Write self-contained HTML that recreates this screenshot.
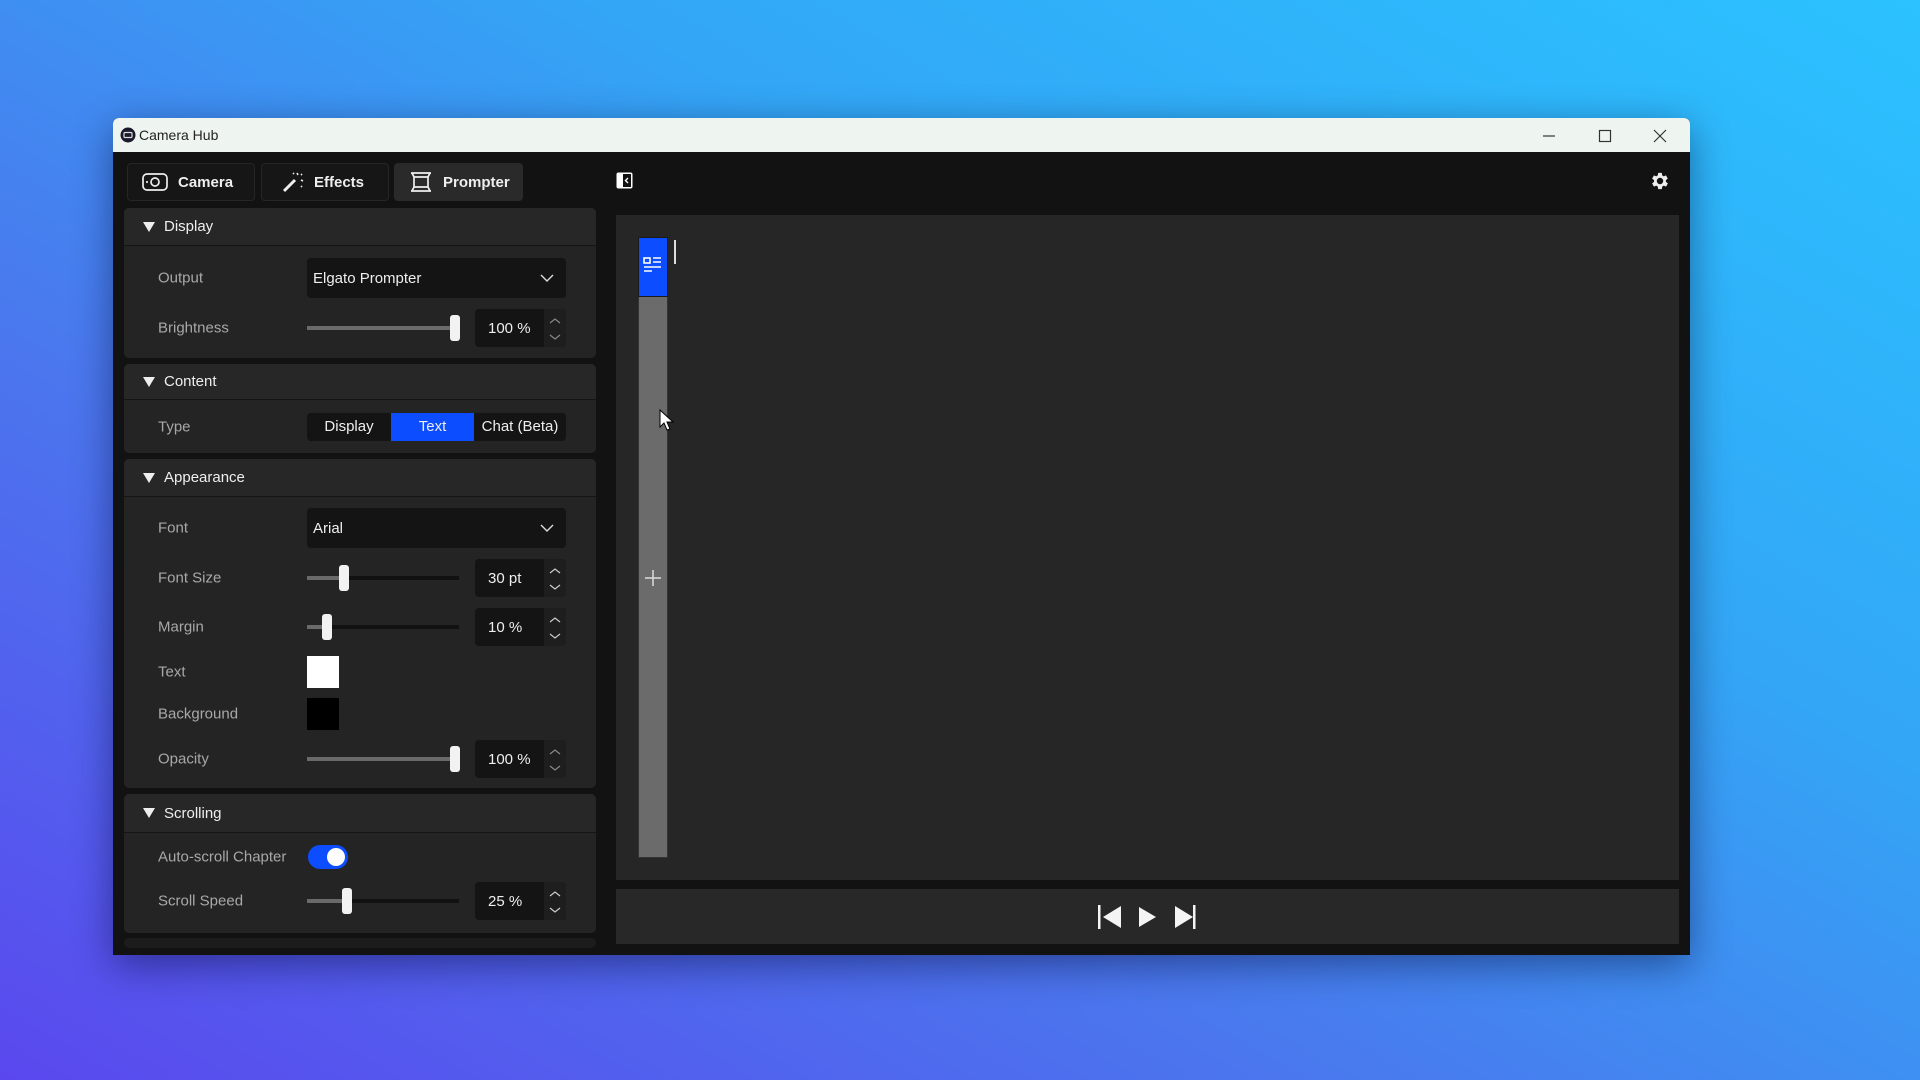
<!DOCTYPE html>
<html><head><meta charset="utf-8"><style>
*{margin:0;padding:0;box-sizing:border-box}
body{width:1920px;height:1080px;overflow:hidden;position:relative;font-family:"Liberation Sans",Arial,sans-serif;
background:linear-gradient(30deg,#5a48ee 0%,#4a78ee 35%,#33a6f6 65%,#2bc2ff 100%);}
.a{position:absolute}
.win{left:113px;top:118px;width:1577px;height:837px;background:#121212;box-shadow:0 10px 40px rgba(0,0,40,.45);border-radius:6px 6px 0 0;overflow:hidden}
.title{left:0;top:0;width:1577px;height:34px;background:#eef5f1;color:#222;font-size:14px}
.tab{top:45px;height:38px;border:1px solid #262626;background:#161616;border-radius:4px;color:#eee;font-weight:bold;font-size:15px;display:flex;align-items:center}
.sec{left:11px;width:472px;background:#242424;border-radius:5px}
.hdr{left:0;top:0;width:472px;border-bottom:1px solid #141414;background:#272727;border-radius:5px 5px 0 0;color:#eee;font-size:15px;display:flex;align-items:center;padding-left:40px}
.hdr:before{content:"";position:absolute;left:19px;top:50%;margin-top:-5px;border-left:6px solid transparent;border-right:6px solid transparent;border-top:10px solid #eee}
.lbl{left:34px;color:#a8a8a8;font-size:15px;transform:translateY(-50%)}
.dd{left:183px;width:259px;height:40px;background:#141414;border-radius:4px;color:#eee;font-size:15px;padding:0 0 0 6px;display:flex;align-items:center}
.trk{left:183px;width:152px;height:4px;background:#111;margin-top:-2px}
.fill{left:0;top:0;height:4px;background:#6a6a6a}
.th{width:10px;height:26px;background:#f2f2f2;border-radius:3px;margin-top:-13px}
.spin{left:351px;width:91px;height:38px;background:#141414;border-radius:4px;margin-top:-19px;color:#eee;font-size:15px}
.spin span{position:absolute;left:13px;top:11px}
.spin i{position:absolute;right:0;top:0;width:22px;height:38px;background:#1e1e1e;border-radius:0 4px 4px 0}
</style></head><body>
<div class="a win">
 <div class="a title">
  <svg class="a" style="left:7px;top:9px" width="16" height="16"><circle cx="8" cy="8" r="7.5" fill="#1a1a2a"/><rect x="4" y="5.5" width="8" height="5" rx="1" fill="none" stroke="#ddd" stroke-width="1.2"/></svg>
  <div class="a" style="left:26px;top:9px">Camera Hub</div>
  <svg class="a" style="left:1430px;top:10px" width="140" height="16" stroke="#333" stroke-width="1.2" fill="none"><path d="M0 8h12"/><rect x="56.5" y="2.5" width="11" height="11"/><path d="M111 2l12 12M123 2l-12 12"/></svg>
 </div>
 <div class="a tab" style="left:14px;width:128px"><svg style="margin:0 10px 0 14px" width="26" height="18" fill="none" stroke="#eee" stroke-width="1.7"><rect x="1" y="1" width="24" height="16" rx="4"/><circle cx="13" cy="9" r="4"/><path d="M4 9h2"/></svg>Camera</div>
 <div class="a tab" style="left:148px;width:128px"><svg style="margin:0 10px 0 20px" width="22" height="22" fill="none" stroke="#eee" stroke-width="1.6"><path d="M2 20l11-11" stroke-width="3"/><path d="M15 2l1 2M20 3l-1 1M19 9l2 1M11 2l1 1M19 15l1 1"/></svg>Effects</div>
 <div class="a tab" style="left:281px;width:129px;background:#2a2a2a;border-color:#2a2a2a"><svg style="margin:0 10px 0 14px" width="24" height="22" fill="none" stroke="#eee" stroke-width="1.7"><path d="M2 2h20M2 20h20M3 2l2 4v10l-2 4M21 2l-2 4v10l2 4M5 6h14v10H5"/></svg>Prompter</div>

 <div class="a sec" style="top:90px;height:150px">
  <div class="a hdr" style="height:38px">Display</div>
  <div class="a lbl" style="top:70px">Output</div>
  <div class="a dd" style="top:50px">Elgato Prompter<svg class="a" style="right:12px;top:16px" width="14" height="8" fill="none" stroke="#ddd" stroke-width="1.4"><path d="M1 1l6 6 6-6"/></svg></div>
  <div class="a lbl" style="top:120px">Brightness</div>
  <div class="a trk" style="top:120px"><div class="a fill" style="width:148px"></div><div class="a th" style="left:143px;top:2px"></div></div>
  <div class="a spin" style="top:120px"><span>100 %</span><i><svg width="22" height="38" fill="none" stroke="#888" stroke-width="1.2"><path d="M6 14l5-4 5 4M6 26l5 4 5-4"/></svg></i></div>
 </div>
 <div class="a sec" style="top:246px;height:89px">
  <div class="a hdr" style="height:36px">Content</div>
  <div class="a lbl" style="top:63px">Type</div>
  <div class="a" style="left:183px;top:49px;width:259px;height:28px;background:#141414;border-radius:4px;color:#eee;font-size:15px">
   <div class="a" style="left:0;width:84px;height:28px;line-height:28px;text-align:center">Display</div>
   <div class="a" style="left:84px;width:83px;height:28px;line-height:28px;text-align:center;background:#0b4dff">Text</div>
   <div class="a" style="left:167px;width:92px;height:28px;line-height:28px;text-align:center">Chat (Beta)</div>
  </div>
 </div>
 <div class="a sec" style="top:341px;height:329px">
  <div class="a hdr" style="height:38px">Appearance</div>
  <div class="a lbl" style="top:69px">Font</div>
  <div class="a dd" style="top:49px">Arial<svg class="a" style="right:12px;top:16px" width="14" height="8" fill="none" stroke="#ddd" stroke-width="1.4"><path d="M1 1l6 6 6-6"/></svg></div>
  <div class="a lbl" style="top:119px">Font Size</div>
  <div class="a trk" style="top:119px"><div class="a fill" style="width:36px"></div><div class="a th" style="left:32px;top:2px"></div></div>
  <div class="a spin" style="top:119px"><span>30 pt</span><i><svg width="22" height="38" fill="none" stroke="#ccc" stroke-width="1.2"><path d="M6 14l5-4 5 4M6 26l5 4 5-4"/></svg></i></div>
  <div class="a lbl" style="top:168px">Margin</div>
  <div class="a trk" style="top:168px"><div class="a fill" style="width:20px"></div><div class="a th" style="left:15px;top:2px"></div></div>
  <div class="a spin" style="top:168px"><span>10 %</span><i><svg width="22" height="38" fill="none" stroke="#ccc" stroke-width="1.2"><path d="M6 14l5-4 5 4M6 26l5 4 5-4"/></svg></i></div>
  <div class="a lbl" style="top:213px">Text</div>
  <div class="a" style="left:183px;top:197px;width:32px;height:32px;background:#fff"></div>
  <div class="a lbl" style="top:255px">Background</div>
  <div class="a" style="left:183px;top:239px;width:32px;height:32px;background:#000"></div>
  <div class="a lbl" style="top:300px">Opacity</div>
  <div class="a trk" style="top:300px"><div class="a fill" style="width:148px"></div><div class="a th" style="left:143px;top:2px"></div></div>
  <div class="a spin" style="top:300px"><span>100 %</span><i><svg width="22" height="38" fill="none" stroke="#888" stroke-width="1.2"><path d="M6 14l5-4 5 4M6 26l5 4 5-4"/></svg></i></div>
 </div>
 <div class="a sec" style="top:676px;height:139px">
  <div class="a hdr" style="height:39px">Scrolling</div>
  <div class="a lbl" style="top:63px">Auto-scroll Chapter</div>
  <div class="a" style="left:184px;top:51px;width:40px;height:24px;background:#0b4dff;border-radius:12px"><div class="a" style="left:19px;top:3px;width:18px;height:18px;border-radius:9px;background:#fff"></div></div>
  <div class="a lbl" style="top:107px">Scroll Speed</div>
  <div class="a trk" style="top:107px"><div class="a fill" style="width:40px"></div><div class="a th" style="left:35px;top:2px"></div></div>
  <div class="a spin" style="top:107px"><span>25 %</span><i><svg width="22" height="38" fill="none" stroke="#ccc" stroke-width="1.2"><path d="M6 14l5-4 5 4M6 26l5 4 5-4"/></svg></i></div>
 </div>
 <div class="a sec" style="top:820px;height:10px;background:#1c1c1c"></div>

 <svg class="a" style="left:503px;top:54px" width="17" height="17"><rect x="0.5" y="0.5" width="16" height="16" rx="2" fill="#fff"/><rect x="7" y="2" width="8" height="13" fill="#111"/><path d="M12 6l-2.5 2.5L12 11" stroke="#fff" stroke-width="1.4" fill="none"/></svg>
 <svg class="a" style="left:1536px;top:52px" width="22" height="22" viewBox="0 0 24 24"><path fill="#eee" d="M19.4 13a7.5 7.5 0 000-2l2.1-1.6-2-3.5-2.5 1a7.5 7.5 0 00-1.7-1L15 3.2h-4l-.4 2.7a7.5 7.5 0 00-1.7 1l-2.5-1-2 3.5L6.5 11a7.5 7.5 0 000 2l-2.1 1.6 2 3.5 2.5-1a7.5 7.5 0 001.7 1l.4 2.7h4l.4-2.7a7.5 7.5 0 001.7-1l2.5 1 2-3.5zM13 15.5a3.5 3.5 0 110-7 3.5 3.5 0 010 7z" transform="translate(-1 0)"/></svg>
 <div class="a" style="left:503px;top:97px;width:1063px;height:665px;background:#262626">
  <div class="a" style="left:22px;top:24px;width:30px;height:619px;background:#6b6b6b;border:1px solid #333"></div>
  <div class="a" style="left:22px;top:22px;width:30px;height:60px;background:#0b4dff;border:1px solid #1a1a1a"></div>
  <svg class="a" style="left:27px;top:40px" width="22" height="20" fill="none" stroke="#fff" stroke-width="1.6"><rect x="1" y="3" width="6" height="5"/><path d="M10 3h8M10 7h8M1 12h17M1 16h8"/></svg>
  <div class="a" style="left:58px;top:25px;width:2px;height:24px;background:#ddd"></div>
  <svg class="a" style="left:28px;top:354px" width="18" height="18" stroke="#ddd" stroke-width="1.5"><path d="M9 1v16M1 9h16"/></svg>
  <svg class="a" style="left:43px;top:194px" width="16" height="24"><path d="M1 1v17l4-4 3 7 3-1-3-7h6z" fill="#fff" stroke="#000"/></svg>
 </div>
 <div class="a" style="left:503px;top:771px;width:1063px;height:55px;background:#282828">
  <svg class="a" style="left:481px;top:15px" width="120" height="26" fill="#f4f4f4"><rect x="1" y="1" width="2.5" height="24"/><path d="M24 2L6 13l18 11z"/><path d="M42 3l17 10-17 10z"/><path d="M78 2l18 11-18 11z"/><rect x="96" y="1" width="2.5" height="24"/></svg>
 </div>
</div>
</body></html>
